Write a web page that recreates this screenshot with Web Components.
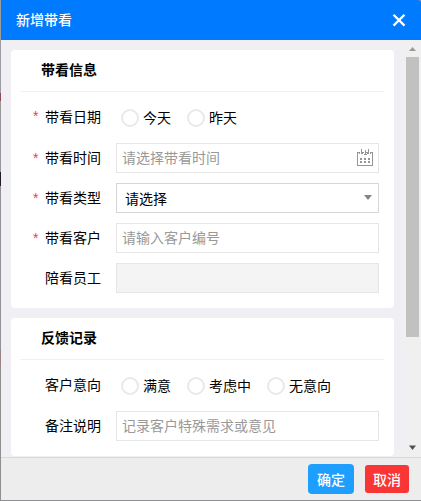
<!DOCTYPE html>
<html lang="zh-CN">
<head>
<meta charset="utf-8">
<title>新增带看</title>
<style>
html,body{margin:0;height:100%;overflow:hidden}
body{font:14px/20px "Noto Sans CJK SC",sans-serif;color:#000;background:linear-gradient(#9c9ca0 0 93px,#8a4d58 93px 101px,#98989c 101px 172px,#251a20 172px 186px,#929296 186px 350px,#9b8084 350px 366px,#8f8f91 366px)}
</style>
</head>
<body>
<visit-dialog heading="新增带看">
  <form-card heading="带看信息">
    <form-row label="带看日期" required class="tall"><radio-option>今天</radio-option><radio-option>昨天</radio-option></form-row>
    <form-row label="带看时间" required><text-field icon="calendar">请选择带看时间</text-field></form-row>
    <form-row label="带看类型" required><text-field kind="select" icon="arrow">请选择</text-field></form-row>
    <form-row label="带看客户" required><text-field>请输入客户编号</text-field></form-row>
    <form-row label="陪看员工"><text-field kind="disabled"></text-field></form-row>
  </form-card>
  <form-card heading="反馈记录">
    <form-row label="客户意向" class="tall"><radio-option>满意</radio-option><radio-option>考虑中</radio-option><radio-option>无意向</radio-option></form-row>
    <form-row label="备注说明"><text-field>记录客户特殊需求或意见</text-field></form-row>
  </form-card>
  <action-button slot="actions" kind="primary">确定</action-button>
  <action-button slot="actions" kind="danger">取消</action-button>
</visit-dialog>
<script>
class Base extends HTMLElement {
  render(html) { this.attachShadow({ mode: 'open' }).innerHTML = html; }
}

customElements.define('scroll-bar', class extends Base {
  connectedCallback() {
    this.render(`<style>
:host{display:flex;flex-direction:column;align-items:center;width:17px;background:#f0f0f1}
svg{display:block;flex:none}
.thumb{width:13px;height:280px;background:#c1c1c0}
.space{flex:1}
</style>
<svg width="17" height="17"><path d="M5 11h7L8.500 7z" fill="#9b9b9b"/></svg>
<div class="thumb"></div><div class="space"></div>
<svg width="17" height="17"><path d="M5 5.500h7L8.500 10z" fill="#505050"/></svg>`);
  }
});

customElements.define('visit-dialog', class extends Base {
  connectedCallback() {
    this.render(`<style>
:host{display:flex;flex-direction:column;box-sizing:border-box;height:100vh;padding:0 0 1px 1px}
header{display:flex;align-items:center;justify-content:space-between;box-sizing:border-box;height:40px;padding:0 15px;background:#007aff;color:#fff;border-top-right-radius:3px}
header span{padding-bottom:2px;font-weight:500}
header svg{display:block}
main{display:flex;flex:1;min-height:0;background:#efeff4}
.cards{display:flex;flex-direction:column;gap:10px;flex:1;padding:10px 10px 0}
footer{display:flex;align-items:center;justify-content:flex-end;gap:11px;box-sizing:border-box;height:43px;padding:0 12px 0 0;border-top:1px solid #d9d9d9;background:#ededed}
</style>
<header><span>${this.getAttribute('heading')}</span>
<svg width="14" height="14" viewBox="0 0 14 14"><path d="M1.500 1.800l11 10.800M12.500 1.800l-11 10.800" fill="none" stroke="#fff" stroke-width="2.300"/></svg></header>
<main><div class="cards"><slot></slot></div><scroll-bar></scroll-bar></main>
<footer><slot name="actions"></slot></footer>`);
  }
});

customElements.define('form-card', class extends Base {
  connectedCallback() {
    this.render(`<style>
:host{display:block;background:#fff;border-radius:4px}
h2{box-sizing:border-box;height:42px;margin:0 10px 5px 9px;padding:9px 0 0 21px;border-bottom:1px solid #f2f2f2;font:bold 14px/20px "Noto Sans CJK SC",sans-serif}
.rows{padding:0 15px 10px 20px}
</style><h2>${this.getAttribute('heading')}</h2><div class="rows"><slot></slot></div>`);
  }
});

customElements.define('form-row', class extends Base {
  connectedCallback() {
    this.render(`<style>
:host{display:flex;align-items:center;height:40px}
:host(.tall){height:41px}
.mark{width:14px;padding-left:2px;box-sizing:border-box;color:#ff3344;font-family:"Liberation Sans",sans-serif}
.label{width:71px;padding-bottom:2px}
:host(.tall) .label,:host(.tall) .mark{padding-bottom:3px}
.control{display:flex;flex:1;gap:16px}
:host(.tall) .control{padding-left:5px}
</style><span class="mark">${this.hasAttribute('required') ? '*' : ''}</span><span class="label">${this.getAttribute('label')}</span><div class="control"><slot></slot></div>`);
  }
});

customElements.define('radio-option', class extends Base {
  connectedCallback() {
    this.render(`<style>
:host{display:flex;align-items:center;gap:4px;white-space:nowrap}
i{box-sizing:border-box;width:18px;height:18px;border:2px solid #e9e9eb;border-radius:50%}
span{margin:-1px 0 1px}
</style><i></i><span><slot></slot></span>`);
  }
});

const fieldIcons = {
  calendar: `<svg class="calendar" width="16" height="17" viewBox="0 0 16 17" shape-rendering="crispEdges"><path d="M2 3.500H.5v13h15v-13H14M2.500 3v2M5.500 5V3M5 3.500h2M9 3.500h2M10.500 5V3M13.500 3v2M4.500 0v5M8 1v4M11.500 0v5M6.500 5.500h3" fill="none" stroke="#959595"/><path d="M3 9h2v2H3zM7 9h2v2H7zM11 9h2v2h-2zM3 12h2v2H3zM7 12h2v2H7zM11 12h2v2h-2z" fill="#959595"/></svg>`,
  arrow: `<svg class="arrow" width="8" height="5"><path d="M0 0h8L4 5z" fill="#858585"/></svg>`
};
customElements.define('text-field', class extends Base {
  connectedCallback() {
    this.render(`<style>
:host{display:flex;align-items:center;justify-content:space-between;box-sizing:border-box;flex:1;height:30px;padding:0 5px;border:1px solid #e6e6e6;background:#fff;color:#999}
:host([kind=select]){padding:0 6px 0 8px;border-color:#d7d7d9;color:#000}
:host([kind=disabled]){background:#f4f4f4}
span{padding-bottom:2px}
:host([kind=select]) span{padding-bottom:0}
svg{display:block}
.calendar{margin-bottom:1px}
.arrow{margin-bottom:1px}
</style><span><slot></slot></span>${fieldIcons[this.getAttribute('icon')] || ''}`);
  }
});

customElements.define('action-button', class extends Base {
  connectedCallback() {
    this.render(`<style>
:host{display:flex;align-items:center;justify-content:center;width:46px;height:30px;border-radius:4px;background:#1e9fff;color:#fff;font-weight:500}
:host([kind=danger]){width:44px;height:28px;background:#f93535;border-radius:3px}
</style><span><slot></slot></span>`);
  }
});
</script>
</body>
</html>
